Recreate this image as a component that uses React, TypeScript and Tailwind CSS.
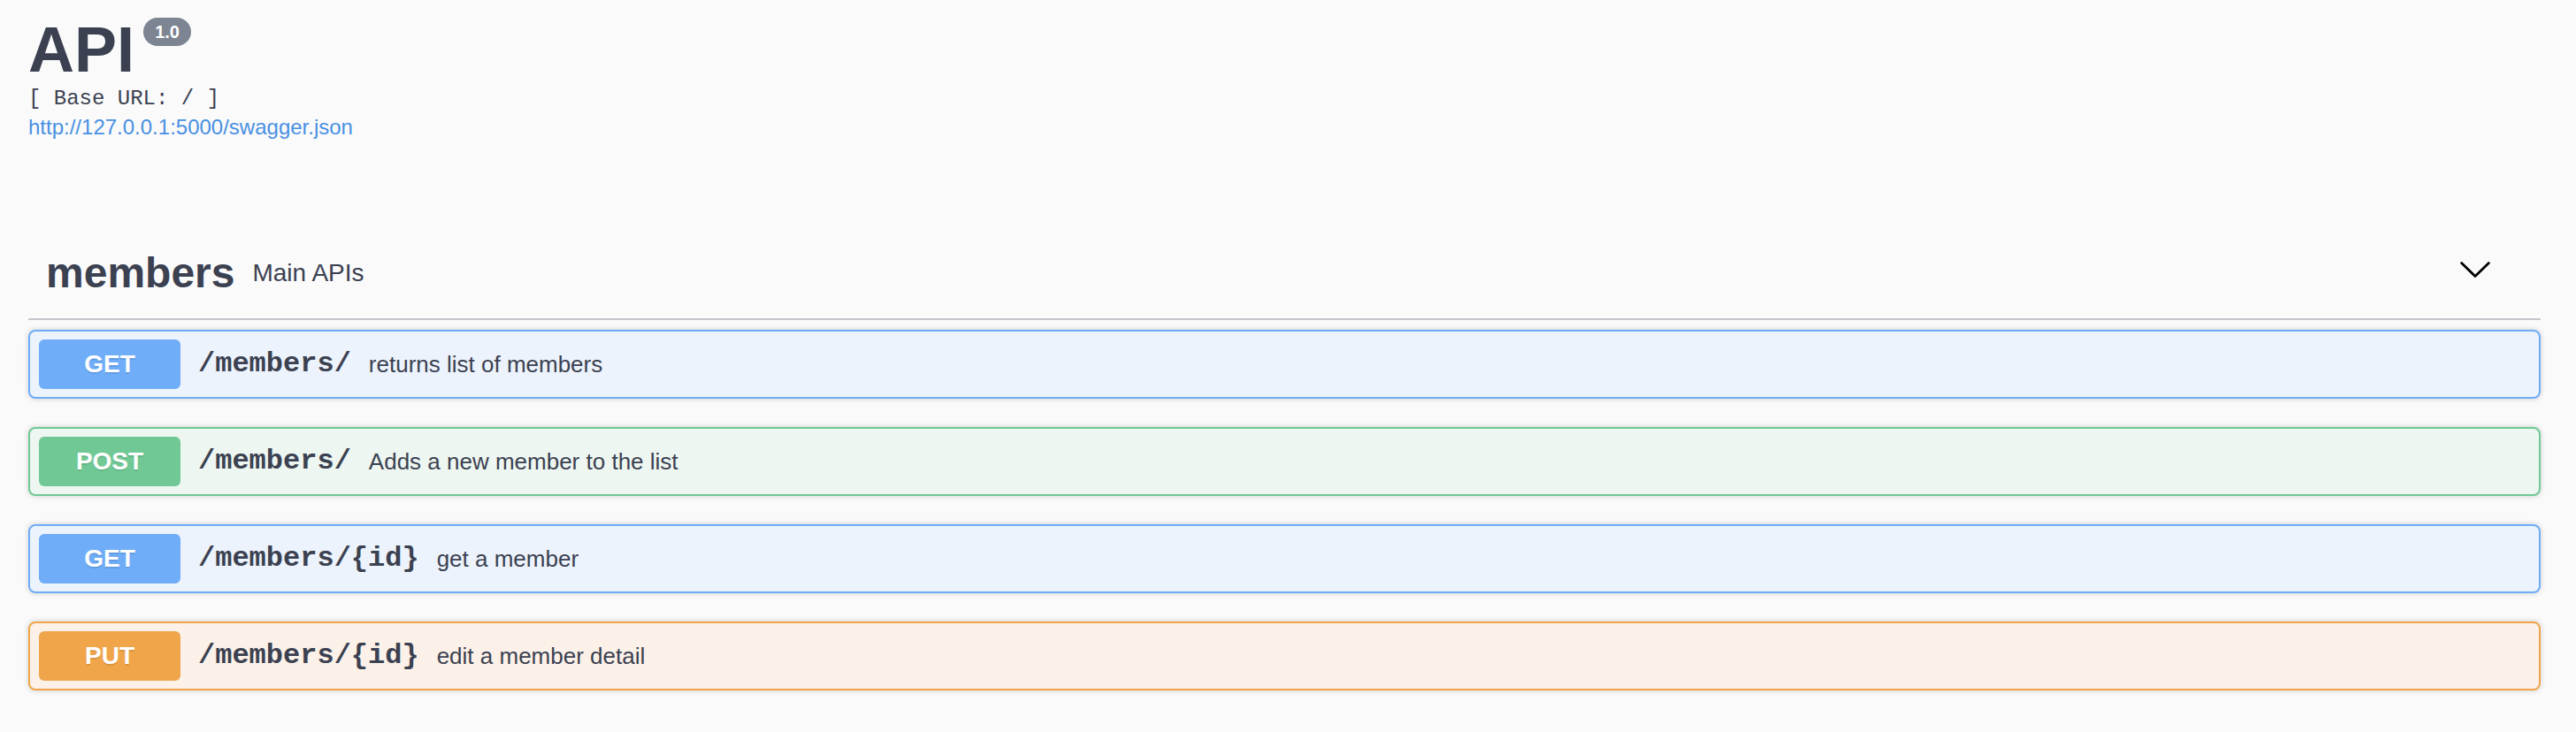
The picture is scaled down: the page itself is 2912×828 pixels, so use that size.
import { Fragment } from 'react'

type Operation = {
  method: 'GET' | 'POST' | 'PUT'
  path: string
  summary: string
}

const operations: Operation[] = [
  { method: 'GET', path: '/members/', summary: 'returns list of members' },
  { method: 'POST', path: '/members/', summary: 'Adds a new member to the list' },
  { method: 'GET', path: '/members/{id}', summary: 'get a member' },
  { method: 'PUT', path: '/members/{id}', summary: 'edit a member detail' },
]

const tones: Record<Operation['method'], { box: string; badge: string }> = {
  GET: { box: 'border-[#6fadf8] bg-[#ecf3fc]', badge: 'bg-[#6fadf8]' },
  POST: { box: 'border-[#70c995] bg-[#edf6f0]', badge: 'bg-[#70c995]' },
  PUT: { box: 'border-[#f0a54b] bg-[#fbf1e8]', badge: 'bg-[#f0a54b]' },
}

function Chevron() {
  return (
    <svg width="34" height="18" viewBox="0 0 34 18" fill="none" className="mb-[8px] shrink-0">
      <polyline points="1.6,1.6 17,16.4 32.4,1.6" stroke="#000" strokeWidth="2.8" strokeLinecap="round" strokeLinejoin="round" />
    </svg>
  )
}

function OperationRow({ op }: { op: Operation }) {
  const tone = tones[op.method]
  return (
    <div
      className={`flex items-center rounded-[8px] border-2 px-[10px] py-[9px] shadow-[0_0_6px_rgba(0,0,0,0.19)] ${tone.box}`}
    >
      <span
        className={`flex h-[56px] w-[160px] shrink-0 items-center justify-center rounded-[6px] text-[28px] font-bold text-white [text-shadow:0_2px_0_rgba(0,0,0,0.1)] ${tone.badge}`}
      >
        {op.method}
      </span>
      <span className="px-[20px] font-['Liberation_Mono',monospace] text-[32px] font-bold text-[#3b4151]">
        {op.path}
      </span>
      <span className="text-[26px] text-[#3b4151]">{op.summary}</span>
    </div>
  )
}

export default function App() {
  return (
    <div className="min-h-screen bg-[#fafafa] pl-[32px] pr-[40px] font-['Liberation_Sans',Arial,sans-serif] text-[#3b4151]">
      {/* info */}
      <div className="pt-[20px]">
        <div className="flex items-start">
          <h2 className="text-[72px] font-bold leading-[72px]">API</h2>
          <span className="ml-[10px] flex h-[32px] w-[54px] items-center justify-center rounded-full bg-[#7d8492] text-[20px] font-bold leading-none text-white">
            1.0
          </span>
        </div>
        <div className="mt-[8px] font-['Liberation_Mono',monospace] text-[24px] leading-[24px]">[ Base URL: / ]</div>
        <a className="mt-[8px] block text-[24px] leading-[24px] text-[#4990e2]">http://127.0.0.1:5000/swagger.json</a>
      </div>

      {/* tag */}
      <div className="mt-[102px] flex h-[104px] items-center border-b-2 border-[#c5c6cb] pl-[20px] pr-[57px]">
        <h4 className="text-[48px] font-bold">members</h4>
        <span className="flex-1 px-[20px] text-[28px]">Main APIs</span>
        <Chevron />
      </div>

      <div className="mt-[11px] flex flex-col gap-[32px]">
        {operations.map((op, i) => (
          <Fragment key={i}>
            <OperationRow op={op} />
          </Fragment>
        ))}
      </div>
    </div>
  )
}
